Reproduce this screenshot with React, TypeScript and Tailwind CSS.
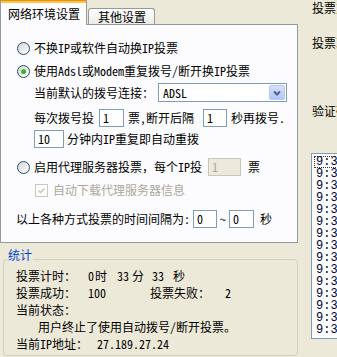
import React from "react";

function Radio({ checked = false }: { checked?: boolean }) {
  return (
    <span className="flex h-[13px] w-[13px] shrink-0 items-center justify-center rounded-full border border-[#1C5180] bg-linear-to-br from-[#D6D6CE] to-white">
      {checked && <span className="h-[5px] w-[5px] rounded-full bg-linear-to-br from-[#4FD04B] to-[#1E9A1E]" />}
    </span>
  );
}

function Box({ value, w, disabled = false }: { value: string; w: string; disabled?: boolean }) {
  return (
    <span
      className={`flex h-full shrink-0 items-center border pl-[3px] ${w} ${
        disabled ? "border-[#C9C7BA] bg-[#EBEADB] text-[#ACA899]" : "border-[#7F9DB9] bg-white"
      }`}
    >
      {value}
    </span>
  );
}

const times = [
  "9:36", "9:35", "9:35", "9:35", "9:35", "9:34", "9:34", "9:34",
  "9:33", "9:33", "9:33", "9:33", "9:32", "9:32", "9:32",
];

export default function App() {
  return (
    <div className="flex h-[357px] w-[337px] overflow-hidden bg-[#ECE9D8] font-['Noto_Sans_Mono_CJK_SC','Noto_Sans_CJK_SC',sans-serif] text-[12px] leading-[14px] text-black">
      <div className="flex w-[298px] shrink-0 flex-col">
        {/* tabs */}
        <div className="flex h-[24px] items-end">
          <div className="relative z-10 -mb-px flex h-[25px] w-[87px] flex-col border-x border-[#919B9C] bg-[#FCFCFE]">
            <div className="h-[3px] border-t border-[#E68B2C] bg-[#FFC83C]" />
            <div className="flex flex-1 items-center pl-[7px]">网络环境设置</div>
          </div>
          <div className="ml-px flex h-[16px] w-[67px] items-center rounded-t-[3px] border border-b-0 border-[#919B9C] bg-linear-to-b from-white to-[#ECEBE6] pl-[9px]">
            其他设置
          </div>
        </div>

        {/* tab page */}
        <div className="flex h-[219px] flex-col border border-[#919B9C] bg-[#FCFCFE] pt-[13px]">
          <div className="flex h-[20px] items-center gap-[4px] pl-[16px]">
            <Radio />
            <span>不换IP或软件自动换IP投票</span>
          </div>
          <div className="mt-[3px] flex h-[20px] items-center gap-[4px] pl-[16px]">
            <Radio checked />
            <span>使用Adsl或Modem重复拨号/断开换IP投票</span>
          </div>
          <div className="mt-[2px] flex h-[19px] items-center pl-[33px]">
            <span className="w-[124px] shrink-0">当前默认的拨号连接：</span>
            <div className="flex h-full w-[129px] items-center justify-between border border-[#7F9DB9] bg-white pl-[4px] pr-px">
              <span>ADSL</span>
              <span className="flex h-[15px] w-[16px] items-center justify-center rounded-[2px] border border-[#B7C9F3] bg-linear-to-b from-[#D6E1FC] to-[#B0C6F6]">
                <svg width="8" height="6" viewBox="0 0 8 6">
                  <path d="M1 1.5 L4 4.5 L7 1.5" fill="none" stroke="#4D6185" strokeWidth="2" />
                </svg>
              </span>
            </div>
          </div>
          <div className="mt-[7px] flex h-[18px] items-center pl-[33px]">
            <span className="w-[65px] shrink-0">每次拨号投</span>
            <Box value="1" w="w-[25px]" />
            <span className="ml-[4px] w-[75px] shrink-0">票,断开后隔</span>
            <Box value="1" w="w-[24px]" />
            <span className="ml-[4px]">秒再拨号.</span>
          </div>
          <div className="mt-[3px] flex h-[18px] items-center pl-[33px]">
            <Box value="10" w="w-[30px]" />
            <span className="ml-[3px]">分钟内IP重复即自动重拨</span>
          </div>
          <div className="mt-[10px] flex h-[18px] items-center pl-[16px]">
            <Radio />
            <span className="ml-[4px] w-[174px] shrink-0">启用代理服务器投票，每个IP投</span>
            <Box value="1" w="w-[33px]" disabled />
            <span className="ml-[7px]">票</span>
          </div>
          <div className="mt-[7px] flex h-[14px] items-center pl-[34px] text-[#ACA899]">
            <span className="flex h-[13px] w-[13px] shrink-0 items-center justify-center border border-[#CAC8BB] bg-white">
              <svg width="9" height="9" viewBox="0 0 9 9">
                <path d="M1.5 4.5 L3.5 6.5 L7.5 2.5" fill="none" stroke="#CAC8BB" strokeWidth="1.6" />
              </svg>
            </span>
            <span className="ml-[5px]">自动下载代理服务器信息</span>
          </div>
          <div className="mt-[13px] flex h-[18px] items-center pl-[15px]">
            <span className="w-[177px] shrink-0">以上各种方式投票的时间间隔为:</span>
            <Box value="0" w="w-[24px]" />
            <span className="w-[12px] shrink-0 text-center">~</span>
            <Box value="0" w="w-[25px]" />
            <span className="ml-[6px]">秒</span>
          </div>
        </div>

        {/* statistics group */}
        <div className="relative ml-[3px] mt-[16px] flex h-[97px] w-[295px] flex-col rounded-[4px] border border-[#D0D0BF] pl-[12px] pt-[7px]">
          <span className="absolute -top-[12px] left-[3px] bg-[#ECE9D8] px-px text-[#0046D5]">统计</span>
          <div className="flex h-[17px] items-center">
            <span className="w-[72px] shrink-0">投票计时：</span>
            <span className="w-[7px] shrink-0">0</span>
            <span className="w-[22px] shrink-0">时</span>
            <span className="w-[15px] shrink-0">33</span>
            <span className="w-[20px] shrink-0">分</span>
            <span className="w-[21px] shrink-0">33</span>
            <span>秒</span>
          </div>
          <div className="flex h-[17px] items-center">
            <span className="w-[72px] shrink-0">投票成功：</span>
            <span className="w-[62px] shrink-0">100</span>
            <span className="w-[75px] shrink-0">投票失败：</span>
            <span>2</span>
          </div>
          <div className="flex h-[17px] items-center">当前状态：</div>
          <div className="flex h-[17px] items-center pl-[22px]">用户终止了使用自动拨号/断开投票。</div>
          <div className="flex h-[17px] items-center">
            <span className="w-[81px] shrink-0">当前IP地址：</span>
            <span>27.189.27.24</span>
          </div>
        </div>
      </div>

      {/* right column, cut off by the window */}
      <div className="flex min-w-0 flex-1 flex-col overflow-hidden pl-[13px]">
        <div className="flex h-[15px] items-center whitespace-nowrap pl-px">投票方</div>
        <div className="mt-[20px] flex h-[15px] items-center whitespace-nowrap pl-px">投票次</div>
        <div className="mt-[53px] flex h-[15px] items-center whitespace-nowrap pl-px">验证码</div>
        <div className="mt-[35px] flex h-[186px] w-[80px] shrink-0 flex-col border border-[#7F9DB9] bg-white pl-[2px] pt-[2px] font-['Liberation_Mono',monospace] text-[12px] leading-[12px] text-[#000033]">
          {times.map((t, i) => (
            <div
              key={i}
              className={`h-[12px] w-[40px] shrink-0 pl-[2px] ${
                i === 0 ? "outline-1 -outline-offset-1 outline-dotted outline-[#333]" : ""
              }`}
            >
              {t}
            </div>
          ))}
        </div>
      </div>
    </div>
  );
}
